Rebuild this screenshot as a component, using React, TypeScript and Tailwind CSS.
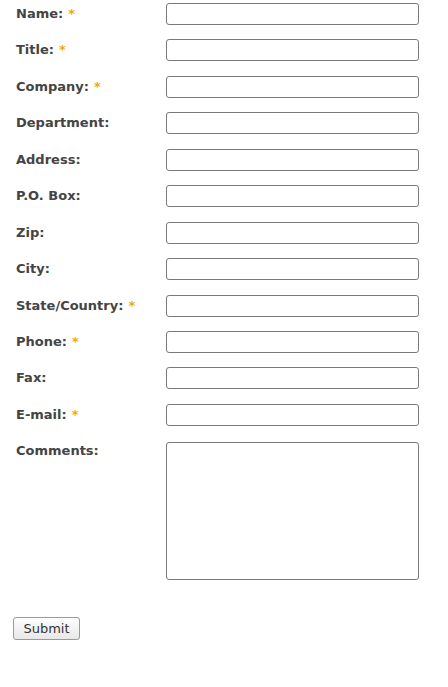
import React from "react";

const fields: { label: string; req?: boolean }[] = [
  { label: "Name:", req: true },
  { label: "Title:", req: true },
  { label: "Company:", req: true },
  { label: "Department:" },
  { label: "Address:" },
  { label: "P.O. Box:" },
  { label: "Zip:" },
  { label: "City:" },
  { label: "State/Country:", req: true },
  { label: "Phone:", req: true },
  { label: "Fax:" },
  { label: "E-mail:", req: true },
];

export default function App() {
  return (
    <div className="w-[448px] h-[687px] bg-white font-['DejaVu_Sans',sans-serif]">
      <div className="pl-[16px] pt-[3px]">
        {fields.map((f) => (
          <div key={f.label} className="flex h-[36.45px]">
            <div className="w-[150px] pt-[1px] text-[13px] leading-[20px] font-bold text-[#444]">
              {f.label}
              {f.req && <span className="ml-[5px] text-[#f5a800]">*</span>}
            </div>
            <input className="w-[253px] h-[22px] border border-[#7a7a7a] rounded-[3px] bg-white" />
          </div>
        ))}
        <div className="flex mt-[1.5px]">
          <div className="w-[150px] -mt-[1px] text-[13px] leading-[20px] font-bold text-[#444]">Comments:</div>
          <textarea className="w-[253px] h-[138px] border border-[#7a7a7a] rounded-[3px] bg-white resize-none" />
        </div>
      </div>
      <div className="pl-[13px] pt-[36px]">
        <button className="w-[67px] h-[23px] border border-[#9a9a9a] rounded-[3px] bg-gradient-to-b from-[#fdfdfd] to-[#e8e8e8] text-[13px] text-[#333] leading-none">
          Submit
        </button>
      </div>
    </div>
  );
}
